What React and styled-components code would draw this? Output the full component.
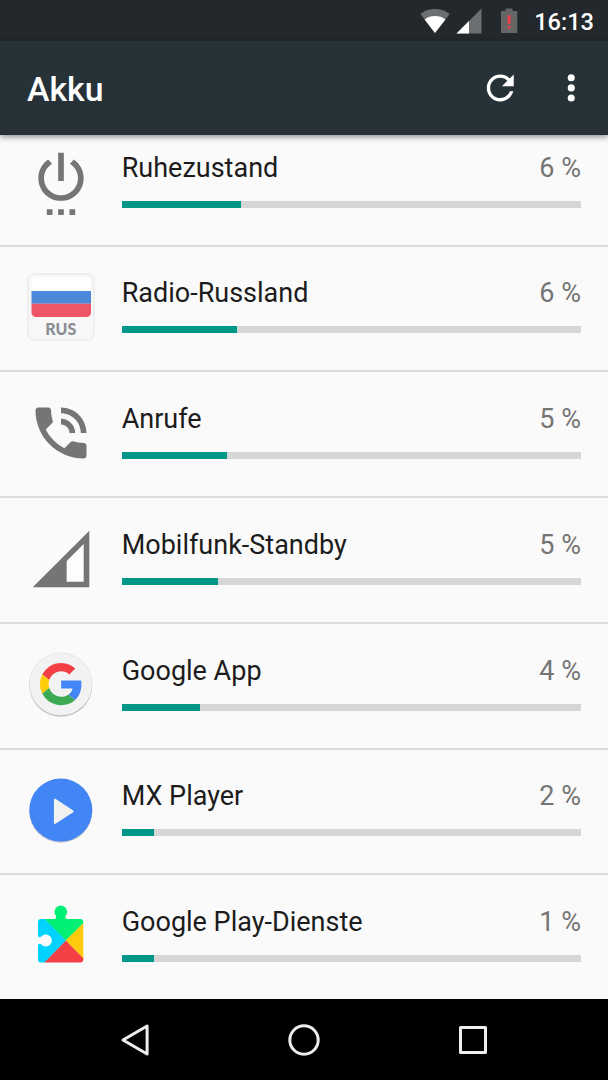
import React from 'react';
import styled, { createGlobalStyle } from 'styled-components';

const GlobalStyle = createGlobalStyle`
  * {
    box-sizing: border-box;
  }
  body {
    margin: 0;
    background: #fafafa;
    font-family: Roboto, "Noto Sans", sans-serif;
  }
  svg {
    display: block;
    flex: none;
  }
`

const Screen = styled.div`
  width: 608px;
  height: 1080px;
  display: flex;
  flex-direction: column;
  overflow: hidden;
  background: #fafafa;
`
const StatusBar = styled.div`
  flex: none;
  height: 41px;
  display: flex;
  align-items: center;
  justify-content: flex-end;
  padding: 0 14px 0 0;
  background: #22282b;
`
const StatusIcons = styled.div`
  display: flex;
  align-items: center;
  gap: 6px;
  margin-right: 16px;
`
const Clock = styled.div`
  color: #fff;
  font-size: 23.6px;
  font-weight: 500;
  line-height: 28px;
  padding-top: 2px;
`
const AppBar = styled.header`
  flex: none;
  position: relative;
  z-index: 1;
  height: 94px;
  display: flex;
  align-items: center;
  padding: 0 17px 0 27px;
  background: #273238;
  box-shadow: 0 2px 6px rgba(0, 0, 0, 0.42);
`
const Title = styled.h1`
  flex: 1;
  margin: 0;
  padding-top: 3px;
  color: #fff;
  font-size: 33.8px;
  font-weight: 500;
  line-height: 40px;
`
const Actions = styled.div`
  display: flex;
  gap: 30.5px;
  fill: #fff;
`
const List = styled.main`
  flex: 1;
  min-height: 0;
  overflow: hidden;
`
// the list is scrolled a little, so its first row starts under the app bar
const Scrolled = styled.div`
  margin-top: -14.3px;
`
const Row = styled.div`
  height: 125.8px;
  display: flex;
  padding: 26.5px 27px 0 26.8px;
  border-bottom: 2px solid #dcdcdc;
`
const AppIcon = styled.div`
  width: 94.9px;
  fill: #757575;
`
const Details = styled.div`
  flex: 1;
  padding-top: 4.3px;
`
const Labels = styled.div`
  display: flex;
  justify-content: space-between;
  font-size: 27px;
  line-height: 32px;
`
const Name = styled.span`
  color: #1c1c1c;
`
const Percent = styled.span`
  color: #757575;
`
const Track = styled.div`
  height: 7px;
  margin-top: 17px;
  background: #d6d6d6;
`
const Fill = styled.div`
  height: 100%;
  background: #009688;
`
const NavBar = styled.nav`
  flex: none;
  height: 81px;
  display: flex;
  align-items: center;
  justify-content: center;
  gap: 135px;
  background: #000;
  fill: none;
  stroke: #eee;
  stroke-width: 3;
  stroke-linejoin: round;
`

const WifiIcon = () => (
  <svg width="30" height="26" viewBox="0 0 30 26">
    <path d="M0.4 6C4.5 2.8 9.5 1 15 1s10.500 1.800 14.600 5L15 25z" fill="#6b6f71" />
    <path d="M4.600 11.400C7.500 9.200 11 8 15 8s7.500 1.200 10.400 3.400L15 25z" fill="#fff" />
  </svg>
)

const SignalIcon = () => (
  <svg width="26" height="26" viewBox="0 0 26 26">
    <path d="M0.500 25.500H25.500V0.500z" fill="#6b6f71" />
    <path d="M0.500 25.500H13V13z" fill="#fff" />
  </svg>
)

const BatteryIcon = () => (
  <svg width="30" height="26" viewBox="-12 0 30 26">
    <path d="M5.500 0.500h7v2.500H17.300v22H1V3h4.500z" fill="#666" />
    <path d="M7.500 7.500h3.200l-.4 8.500H7.900z" fill="#f43c48" />
    <circle cx="9.100" cy="18.900" r="1.500" fill="#f43c48" />
  </svg>
)

const PowerIcon = () => (
  <svg width="68" height="68" viewBox="0 0 24 24">
    <path d="M7 24h2v-2H7v2zm4 0h2v-2h-2v2zm2-22h-2v10h2V2zm3.560 2.440l-1.450 1.450C16.840 6.940 18 8.830 18 11c0 3.310-2.690 6-6 6s-6-2.690-6-6c0-2.170 1.160-4.060 2.880-5.120L7.440 4.440C5.360 5.880 4 8.280 4 11c0 4.420 3.580 8 8 8s8-3.580 8-8c0-2.720-1.360-5.120-3.440-6.560zM15 24h2v-2h-2v2z" />
  </svg>
)

const RussiaIcon = () => (
  <svg width="68" height="68" viewBox="0 0 68 68">
    <rect x="1" y="1" width="66" height="66" rx="6" fill="#f7f7f7" stroke="#e6e6e6" />
    <path d="M4.500 18V8.500a4.500 4.500 0 0 1 4.500-4.500h50.500a4.500 4.500 0 0 1 4.500 4.500V18z" fill="#fff" />
    <path d="M4.500 17.900H64v12.900H4.500z" fill="#4b88da" />
    <path d="M4.500 30.700H64v8.800a4.500 4.500 0 0 1-4.500 4.500H9a4.500 4.500 0 0 1-4.500-4.500z" fill="#ee5567" />
    <text x="33.700" y="61.500" textAnchor="middle" fontFamily="Lato, sans-serif" fontSize="16" fontWeight="900" fill="#8a8d93">RUS</text>
  </svg>
)

const CallIcon = () => (
  <svg width="68" height="68" viewBox="0 0 24 24">
    <path d="M20 15.500c-1.250 0-2.450-.2-3.570-.57-.35-.11-.74-.03-1.020.24l-2.200 2.200c-2.830-1.440-5.150-3.750-6.590-6.590l2.200-2.210c.28-.26.36-.65.25-1C8.700 6.450 8.500 5.250 8.500 4c0-.55-.45-1-1-1H4c-.55 0-1 .45-1 1 0 9.390 7.610 17 17 17 .55 0 1-.45 1-1v-3.500c0-.55-.45-1-1-1zM19 12h2c0-4.970-4.030-9-9-9v2c3.870 0 7 3.130 7 7zm-4 0h2c0-2.760-2.240-5-5-5v2c1.660 0 3 1.340 3 3z" />
  </svg>
)

const CellIcon = () => (
  <svg width="68" height="68" viewBox="0 0 24 24">
    <path d="M2 22h20V2L2 22z" />
    <path d="M20 20h-6v-7.300l6-6V20z" fill="#fdfdfd" />
  </svg>
)

const GoogleIcon = () => (
  <svg width="68" height="68" viewBox="0 0 68 68">
    <circle cx="33.800" cy="35.200" r="31.500" fill="#b8b8b8" />
    <circle cx="33.800" cy="34.100" r="31.500" fill="#e2e2e2" />
    <circle cx="33.800" cy="34.100" r="31" fill="#f2f2f2" />
    <g transform="translate(13 12.900) scale(.881)">
      <path fill="#f43f47" d="M24 9.500c3.540 0 6.710 1.220 9.210 3.600l6.850-6.850C35.900 2.380 30.470 0 24 0 14.620 0 6.510 5.380 2.560 13.220l7.980 6.190C12.430 13.720 17.740 9.500 24 9.500z" />
      <path fill="#4285f4" d="M46.980 24.550c0-1.570-.15-3.090-.38-4.550H24v9.020h12.940c-.58 2.960-2.260 5.480-4.780 7.180l7.730 6c4.510-4.180 7.090-10.360 7.090-17.650z" />
      <path fill="#ffcc0a" d="M10.530 28.590c-.48-1.450-.76-2.990-.76-4.590s.27-3.140.76-4.590l-7.980-6.190C.92 16.460 0 20.120 0 24c0 3.880.92 7.540 2.560 10.780l7.970-6.190z" />
      <path fill="#3dab55" d="M24 48c6.480 0 11.930-2.130 15.890-5.810l-7.730-6c-2.150 1.450-4.920 2.300-8.160 2.300-6.260 0-11.570-4.220-13.470-9.910l-7.980 6.190C6.510 42.620 14.620 48 24 48z" />
    </g>
  </svg>
)

const PlayerIcon = () => (
  <svg width="68" height="68" viewBox="0 0 68 68">
    <circle cx="33.800" cy="35.200" r="31.500" fill="#c0c2c8" />
    <circle cx="33.800" cy="34.100" r="31.500" fill="#4285f4" />
    <path d="M27.900 23.700v23.200L45.700 35.300z" fill="#f1f1f1" stroke="#f1f1f1" strokeWidth="2" strokeLinejoin="round" />
  </svg>
)

const PlayServicesIcon = () => (
  <svg width="68" height="68" viewBox="0.200 0.300 68 68">
    <path d="M17.600 17.300H27c2.200 0 3-1.600 2.100-3.200a6.300 6.300 0 1 1 9.800 0c-.9 1.600-.1 3.200 2.100 3.200h12.500a3 3 0 0 1 3 3v1.200L39 39z" fill="#00f076" />
    <path d="M56.500 21.500v35.200L38.800 38.900z" fill="#ffcb0c" />
    <path d="M38.900 38.800L56.500 56.500v1.200a3 3 0 0 1-3 3H17.300z" fill="#f43f47" />
    <path d="M17.700 17.300h-3.500a3 3 0 0 0-3 3v13.200c0 2 1.800 2.600 3.400 1.300a6 6 0 1 1 0 8c-1.600-1.300-3.400-.7-3.400 1.300v13.600a3 3 0 0 0 3 3h3.300L39 38.900z" fill="#00d3ff" />
  </svg>
)

const apps = [
  { name: 'Ruhezustand', percent: 6, bar: 26, Icon: PowerIcon },
  { name: 'Radio-Russland', percent: 6, bar: 25, Icon: RussiaIcon },
  { name: 'Anrufe', percent: 5, bar: 23, Icon: CallIcon },
  { name: 'Mobilfunk-Standby', percent: 5, bar: 21, Icon: CellIcon },
  { name: 'Google App', percent: 4, bar: 17, Icon: GoogleIcon },
  { name: 'MX Player', percent: 2, bar: 7, Icon: PlayerIcon },
  { name: 'Google Play-Dienste', percent: 1, bar: 7, Icon: PlayServicesIcon },
];

const UsageRow = props => {
  const { name, percent, bar, Icon } = props.app;
  return (
    <Row>
      <AppIcon>
        <Icon />
      </AppIcon>
      <Details>
        <Labels>
          <Name>{name}</Name>
          <Percent>{percent} %</Percent>
        </Labels>
        <Track>
          <Fill style={{ width: `${bar}%` }} />
        </Track>
      </Details>
    </Row>
  );
};

const App = () => (
  <Screen>
    <GlobalStyle />
    <StatusBar>
      <StatusIcons>
        <WifiIcon />
        <SignalIcon />
        <BatteryIcon />
      </StatusIcons>
      <Clock>16:13</Clock>
    </StatusBar>
    <AppBar>
      <Title>Akku</Title>
      <Actions>
        <svg width="40.500" height="40.500" viewBox="0 0.200 24 24">
          <path d="M17.650 6.350C16.200 4.900 14.210 4 12 4c-4.420 0-7.990 3.580-7.990 8s3.570 8 7.990 8c3.730 0 6.840-2.550 7.730-6h-2.080c-.82 2.330-3.040 4-5.650 4-3.310 0-6-2.690-6-6s2.690-6 6-6c1.660 0 3.140.69 4.220 1.780L13 11h7V4l-2.350 2.350z" />
        </svg>
        <svg width="40.500" height="40.500" viewBox="0 0.200 24 24">
          <circle cx="12" cy="6" r="2.100" />
          <circle cx="12" cy="12" r="2.100" />
          <circle cx="12" cy="18" r="2.100" />
        </svg>
      </Actions>
    </AppBar>
    <List>
      <Scrolled>
        {apps.map(app => (
          <UsageRow key={app.name} app={app} />
        ))}
      </Scrolled>
    </List>
    <NavBar>
      <svg width="34" height="34" viewBox="0 0 34 34">
        <path d="M5 17L29.100 3v28z" />
      </svg>
      <svg width="34" height="34" viewBox="0 0 34 34">
        <circle cx="17" cy="17" r="14.200" />
      </svg>
      <svg width="34" height="34" viewBox="0 0 34 34">
        <rect x="4.500" y="4.500" width="25" height="25" />
      </svg>
    </NavBar>
  </Screen>
);

export default App;
